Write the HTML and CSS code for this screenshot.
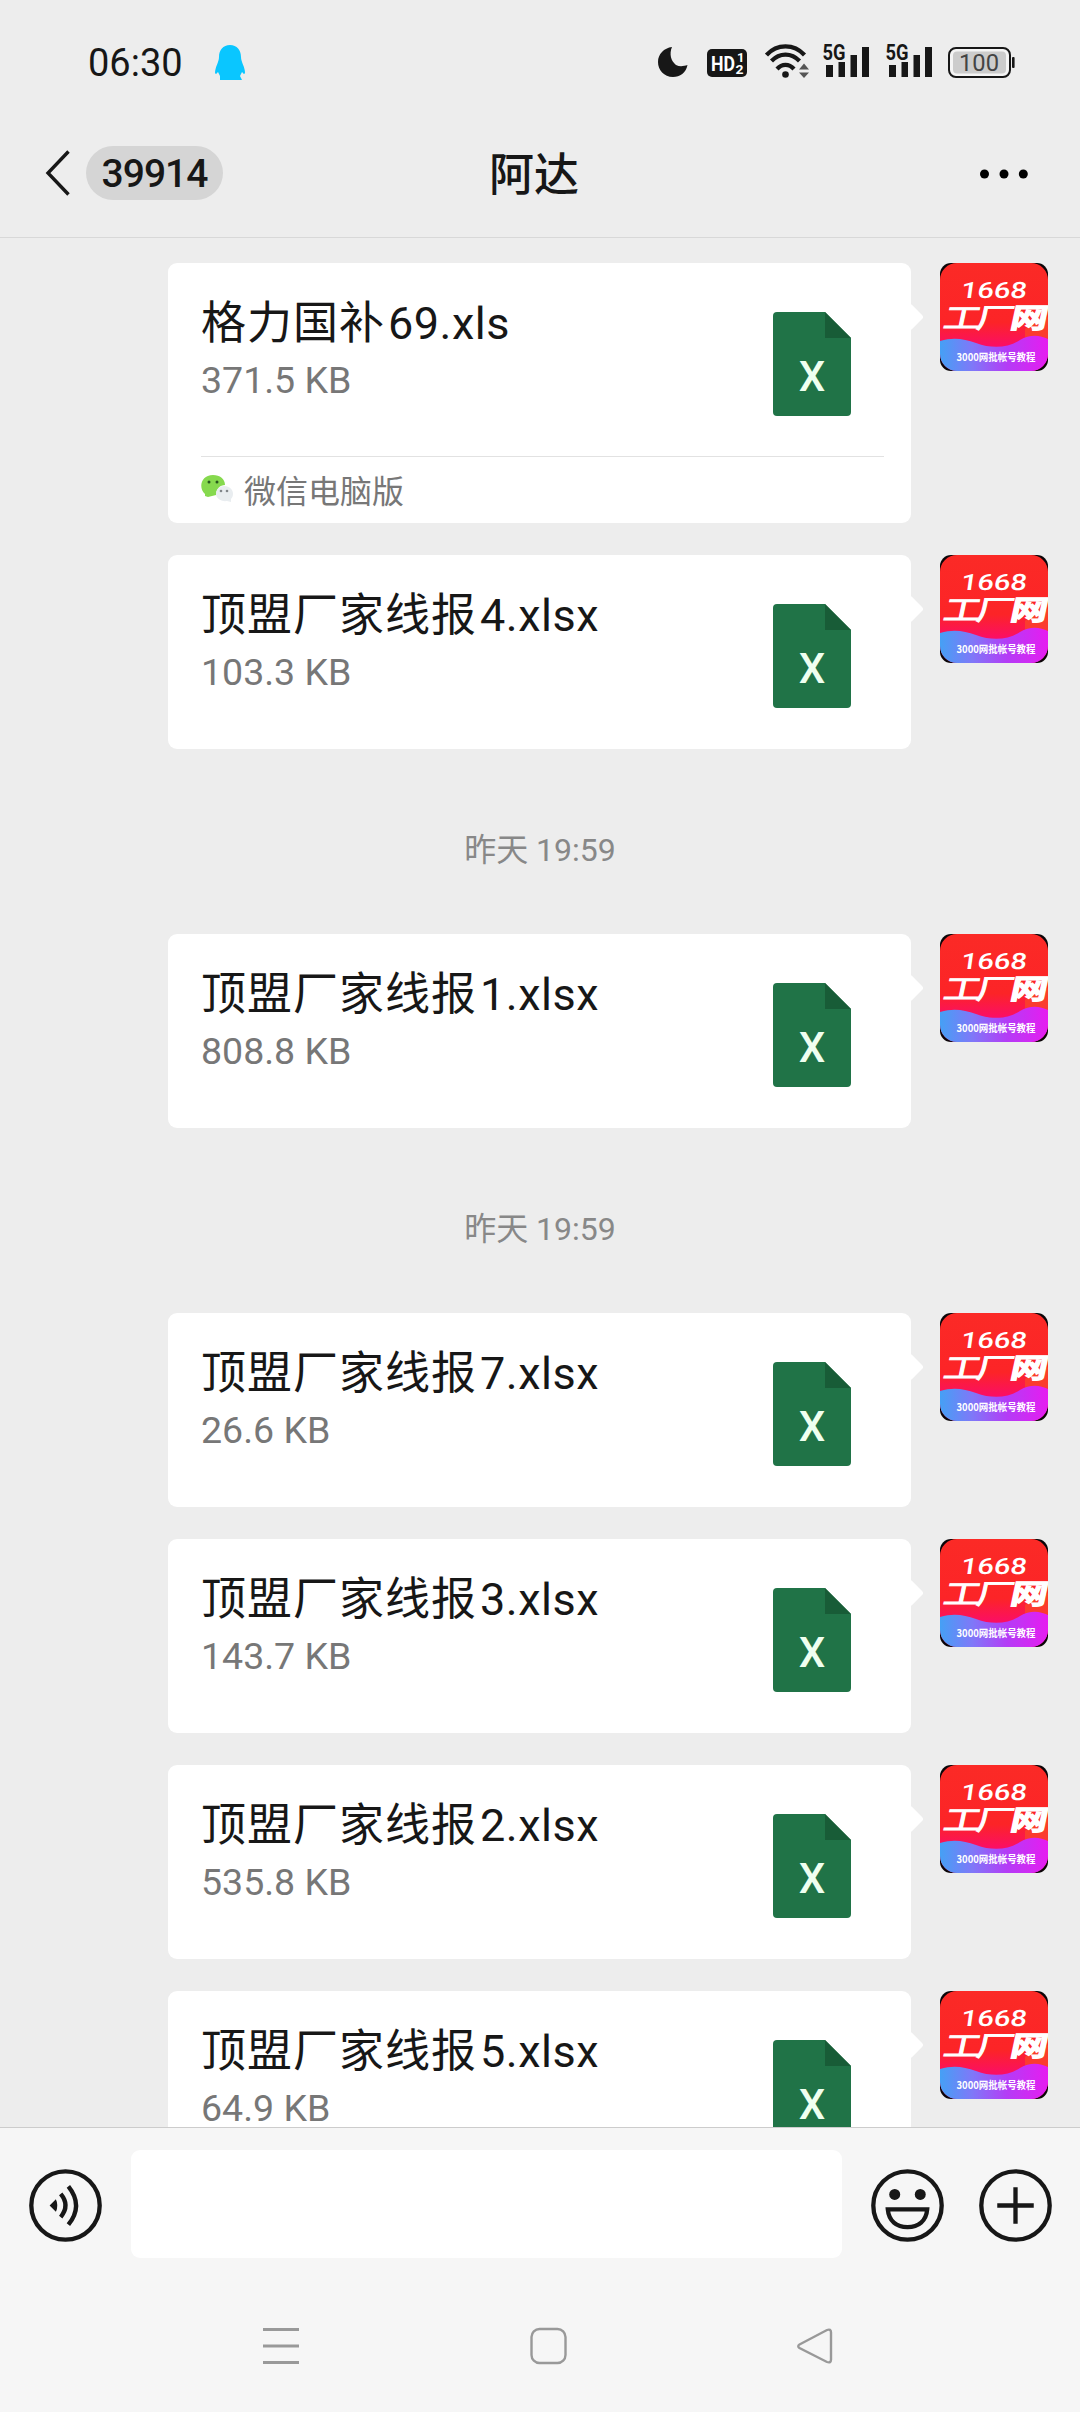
FILE: index.html
```html
<!DOCTYPE html>
<html lang="zh-CN">
<head>
<meta charset="utf-8">
<title>阿达</title>
<link rel="stylesheet" href="styles.css">
</head>
<body>
<svg class="defs" width="0" height="0" aria-hidden="true">
  <defs>
    <linearGradient id="wave" x1="0" y1="0" x2="1" y2="0">
      <stop offset="0" stop-color="#45a0f5"/><stop offset=".3" stop-color="#7f78f8"/>
      <stop offset=".62" stop-color="#b43cf6"/><stop offset="1" stop-color="#e61cf0"/>
    </linearGradient>
    <linearGradient id="red" x1="0" y1="0" x2="0" y2="1">
      <stop offset="0" stop-color="#fb2a26"/><stop offset=".55" stop-color="#fc2427"/><stop offset=".76" stop-color="#fb0f62"/>
    </linearGradient>
    <symbol id="avatar" viewBox="0 0 108 108">
      <rect width="108" height="108" fill="#0b0508"/>
      <rect width="108" height="108" rx="17" fill="url(#red)"/>
      <path d="M85 66C92 58 100 60 108 54V76H85Z" fill="#fb4a26" opacity=".7"/>
      <path d="M0 78C14 74 24 76 36 80C52 86 68 85 80 77C90 71 100 72 108 76V91A17 17 0 0 1 91 108H17A17 17 0 0 1 0 91Z" fill="url(#wave)"/>
      <g fill="#fff">
        <text class="av-num" transform="translate(20 34.5) skewX(-8)" textLength="66" lengthAdjust="spacingAndGlyphs">1668</text>
        <g class="av-name" transform="translate(0 65) skewX(-12)">
          <text x="2" textLength="37" lengthAdjust="spacingAndGlyphs">工</text>
          <text x="35" textLength="37" lengthAdjust="spacingAndGlyphs">厂</text>
          <text class="av-heavy" x="69" textLength="37" lengthAdjust="spacingAndGlyphs">网</text>
        </g>
        <text class="av-sub" x="16.5" y="98" textLength="79" lengthAdjust="spacingAndGlyphs">3000网批帐号教程</text>
      </g>
    </symbol>
    <symbol id="excel" viewBox="0 0 78 104">
      <path d="M4 0H52L78 26V100A4 4 0 0 1 74 104H4A4 4 0 0 1 0 100V4A4 4 0 0 1 4 0Z" fill="#207347"/>
      <path d="M52 0L78 26H52Z" fill="#185c37"/>
      <text class="xl-letter" x="39" y="79" text-anchor="middle" fill="#effff0">X</text>
    </symbol>
    <symbol id="signal" viewBox="0 0 46 34">
      <text class="sig-text" x="-.5" y="15.8" textLength="23" lengthAdjust="spacingAndGlyphs">5G</text>
      <path d="M3 21h7v12h-7zM15.500 18h6.500v15h-6.500zM27.500 11h6.500v22h-6.500zM39 3h7v30h-7z"/>
    </symbol>
  </defs>
</svg>

<div class="screen">
  <header class="top">
    <div class="status">
      <span class="clock">06:30</span>
      <svg class="qq" viewBox="0 0 30 36"><path fill="#0ac6ff" d="M15 0C22 0 26 5 26 12C26 17 30 22 30 28C29 30 28 28 27 27L25 31L27 35H5V31L3 27C2 28 1 30 0 28C0 22 4 17 4 12C4 5 8 0 15 0Z"/></svg>
      <div class="indicators">
        <svg class="moon" viewBox="0 0 30 30"><path d="M14 0C11 7 13 14 18 18C22 20 26 19 29.500 18C28 26 22 30 15 30C6 30 0 23 0 15C0 7 6 1 14 0Z"/></svg>
        <svg class="hd" viewBox="0 0 40 28"><rect width="40" height="28" rx="5"/><g fill="#fff"><text class="hd-main" x="4" y="22" textLength="24" lengthAdjust="spacingAndGlyphs">HD</text><text class="hd-sub" x="30" y="13">1</text><text class="hd-sub" x="28.500" y="25" textLength="8" lengthAdjust="spacingAndGlyphs">2</text></g></svg>
        <svg class="wifi" viewBox="0 0 45 34"><g fill="none" stroke="#171717" stroke-width="4.200"><path d="M1.500 11C12-.5 29-.5 39.500 11"/><path d="M6.500 17C14.500 8.500 26.500 8.500 34.500 17"/><path d="M12 25C17 19.500 24 19.500 29 25"/></g><circle cx="20.500" cy="30.500" r="3.300"/><path fill="#555" d="M34 25.500L39 19.500L44 25.500ZM34 28.500H44L39 34Z"/></svg>
        <svg class="signal"><use href="#signal"/></svg>
        <svg class="signal"><use href="#signal"/></svg>
        <svg class="battery" viewBox="0 0 67 31"><rect x="1" y="1" width="61" height="29" rx="7" fill="#f5f5f5" stroke="#171717" stroke-width="2"/><rect x="5" y="4.500" width="53" height="22" rx="4" fill="#ccc"/><rect x="64" y="10" width="2.600" height="11" rx="1"/><text class="bat-text" x="11" y="23.500" textLength="40" lengthAdjust="spacingAndGlyphs">100</text></svg>
      </div>
    </div>
    <div class="titlebar">
      <div class="back">
        <svg class="chevron" viewBox="0 0 26 46"><path d="M23.500 1.500L3 23L23.500 44.500" fill="none" stroke="#171717" stroke-width="3.400"/></svg>
        <span class="unread">39914</span>
      </div>
      <h1>阿达</h1>
      <svg class="more" viewBox="0 0 50 10"><circle cx="5.500" cy="5" r="4.500"/><circle cx="25" cy="5" r="4.500"/><circle cx="44.300" cy="5" r="4.500"/></svg>
    </div>
  </header>

  <main class="chat">
    <div class="message">
      <article class="card">
        <div class="file"><div class="info"><p class="name"><span class="han">格力国补</span>69.xls</p><p class="size">371.5 KB</p></div><svg class="excel"><use href="#excel"/></svg></div>
        <footer class="source">
          <svg class="wechat" viewBox="0 0 32 28"><path fill="#86d94e" d="M12 0C19 0 24 4 24 10C19 10 15 14 15 20L7 22L4 21V19C-3 13 0 0 12 0Z"/><path fill="#e9edf0" d="M23 11C29 11 32 15 32 19C32 21 31 23 30 24V27L26 26C20 27 15 23 15 19C15 14 19 11 23 11Z"/><g fill="#28571d"><circle cx="8" cy="7" r="1.500"/><circle cx="16" cy="7" r="1.500"/></g><g fill="#81868a"><circle cx="20" cy="16" r="1.300"/><circle cx="26" cy="16" r="1.300"/></g></svg>
          <span>微信电脑版</span>
        </footer>
      </article>
      <svg class="avatar"><use href="#avatar"/></svg>
    </div>
    <div class="message">
      <article class="card"><div class="file"><div class="info"><p class="name"><span class="han">顶盟厂家线报</span>4.xlsx</p><p class="size">103.3 KB</p></div><svg class="excel"><use href="#excel"/></svg></div></article>
      <svg class="avatar"><use href="#avatar"/></svg>
    </div>
    <time class="stamp">昨天 19:59</time>
    <div class="message">
      <article class="card"><div class="file"><div class="info"><p class="name"><span class="han">顶盟厂家线报</span>1.xlsx</p><p class="size">808.8 KB</p></div><svg class="excel"><use href="#excel"/></svg></div></article>
      <svg class="avatar"><use href="#avatar"/></svg>
    </div>
    <time class="stamp">昨天 19:59</time>
    <div class="message">
      <article class="card"><div class="file"><div class="info"><p class="name"><span class="han">顶盟厂家线报</span>7.xlsx</p><p class="size">26.6 KB</p></div><svg class="excel"><use href="#excel"/></svg></div></article>
      <svg class="avatar"><use href="#avatar"/></svg>
    </div>
    <div class="message">
      <article class="card"><div class="file"><div class="info"><p class="name"><span class="han">顶盟厂家线报</span>3.xlsx</p><p class="size">143.7 KB</p></div><svg class="excel"><use href="#excel"/></svg></div></article>
      <svg class="avatar"><use href="#avatar"/></svg>
    </div>
    <div class="message">
      <article class="card"><div class="file"><div class="info"><p class="name"><span class="han">顶盟厂家线报</span>2.xlsx</p><p class="size">535.8 KB</p></div><svg class="excel"><use href="#excel"/></svg></div></article>
      <svg class="avatar"><use href="#avatar"/></svg>
    </div>
    <div class="message">
      <article class="card"><div class="file"><div class="info"><p class="name"><span class="han">顶盟厂家线报</span>5.xlsx</p><p class="size">64.9 KB</p></div><svg class="excel"><use href="#excel"/></svg></div></article>
      <svg class="avatar"><use href="#avatar"/></svg>
    </div>
  </main>

  <footer class="bottom">
    <div class="composer">
      <svg class="tool" viewBox="0 0 76 76"><circle cx="38" cy="38" r="35.600"/><path class="solid" d="M21.500 38L28 31.500Q31 38 28 44.500Z"/><path d="M33 26Q43 38 33 50M41 18Q57 38 41 58"/></svg>
      <div class="input"></div>
      <svg class="tool" viewBox="0 0 76 76"><circle cx="38" cy="38" r="35.600"/><circle class="solid" cx="24.700" cy="26.500" r="5.700"/><circle class="solid" cx="51.300" cy="26.500" r="5.700"/><path d="M17.500 42H58.500C57.500 54 49.500 60.500 38 60.500S18.500 54 17.500 42Z"/></svg>
      <svg class="tool" viewBox="0 0 76 76"><circle cx="38" cy="38" r="35.600"/><path d="M38 19V57M19 38H57"/></svg>
    </div>
    <nav class="sysnav">
      <svg viewBox="0 0 38 38"><path d="M1 2.500H37M1 19H37M1 35.500H37" stroke-width="3"/></svg>
      <svg viewBox="0 0 38 38"><rect x="2.500" y="2" width="34" height="34" rx="8" stroke-width="2.400"/></svg>
      <svg viewBox="0 0 38 38"><path d="M3.500 17.500L31 3Q35 1.500 35 5.500V32.500Q35 36.500 31 35L3.500 21Q1 19 3.500 17.500Z" stroke-width="2.400"/></svg>
    </nav>
  </footer>
</div>
</body>
</html>
```
FILE: styles.css
```css
* { box-sizing: border-box; }
body, h1, p { margin: 0; }
body {
  background: #ededed;
  color: #171717;
  font-family: Roboto, "Noto Sans CJK SC", sans-serif;
}
svg { display: block; flex: none; }
.defs { position: absolute; }

.screen {
  display: flex;
  flex-direction: column;
  width: 1080px;
  height: 2412px;
  overflow: hidden;
}

/* Status bar and title */
.top {
  flex: none;
  height: 238px;
  border-bottom: 1px solid #d8d8d8;
}
.status {
  display: flex;
  align-items: center;
  height: 126px;
  padding: 0 65px 0 88px;
}
.clock { width: 127px; font-size: 38px; line-height: 44px; }
.qq { width: 30px; height: 36px; }
.indicators {
  display: flex;
  align-items: flex-end;
  height: 34px;
  margin-left: auto;
  margin-bottom: 4px;
  fill: #171717;
}
.moon { width: 30px; height: 30px; margin: 0 19px 1px 0; }
.hd { width: 40px; height: 28px; margin: 0 18px 1px 0; }
.hd-main { font: 700 21px Roboto, sans-serif; }
.hd-sub { font: 700 13px Roboto, sans-serif; }
.wifi { width: 45px; height: 34px; margin-right: 13px; }
.signal { width: 46px; height: 34px; margin-right: 17px; }
.signal + .battery { margin-left: -1px; }
.sig-text { font: 700 21.500px Roboto, sans-serif; }
.battery { width: 67px; height: 31px; }
.bat-text { font: 400 24px Roboto, sans-serif; fill: #444; }

.titlebar {
  display: grid;
  grid-template-columns: 1fr auto 1fr;
  align-items: center;
  height: 104px;
  padding: 0 45px 11px;
}
.back { display: flex; align-items: center; gap: 15px; }
.chevron { width: 26px; height: 46px; }
.unread {
  width: 137px;
  height: 54px;
  border-radius: 27px;
  background: #d5d5d5;
  font-size: 39px;
  font-weight: 500;
  line-height: 57px;
  letter-spacing: -1px;
  text-align: center;
}
h1 { font-size: 45px; font-weight: 500; line-height: 60px; margin: 6px 12px 0 0; }
.more { width: 50px; height: 10px; justify-self: end; margin: 3px 6px 0 0; }

/* Conversation */
.chat {
  display: flex;
  flex: 1;
  flex-direction: column;
  gap: 32px;
  min-height: 0;
  padding: 25px 32px 0 168px;
  overflow: hidden;
}
.message {
  display: flex;
  flex: none;
  align-items: flex-start;
  gap: 29px;
}
.card {
  position: relative;
  width: 743px;
  border-radius: 9px;
  background: #fff;
}
.card::after {
  content: "";
  position: absolute;
  top: 44px;
  right: -9px;
  width: 20px;
  height: 20px;
  border-radius: 3px;
  background: #fff;
  transform: rotate(45deg);
}
.file {
  display: flex;
  justify-content: space-between;
  height: 194px;
  padding: 33px 60px 0 33px;
}
.name { font-size: 45px; line-height: 56px; letter-spacing: .5px; }
.han { margin-right: 3px; letter-spacing: 1px; }
.size { margin-top: 6px; color: #777; font-size: 37.5px; line-height: 45px; }
.excel { width: 78px; height: 104px; margin-top: 16px; }
.xl-letter { font: 500 42px Roboto, sans-serif; }
.avatar { width: 108px; height: 108px; border-radius: 11px; }
.av-num { font: 500 22.500px Roboto, sans-serif; }
.av-name { font: 400 28px "Noto Sans CJK SC", sans-serif; stroke: #fff; stroke-width: .9px; }
.av-heavy { font-weight: 700; stroke-width: 1.200px; }
.av-sub { font: 700 10.500px "Noto Sans CJK SC", sans-serif; }
.source {
  display: flex;
  gap: 11px;
  height: 67px;
  margin: -1px 27px 0 33px;
  padding-top: 11px;
  border-top: 1px solid #e2e2e2;
  color: #777;
  font-size: 32px;
  line-height: 48px;
}
.wechat { width: 32px; height: 28px; margin-top: 7px; }
.stamp {
  flex: none;
  height: 121px;
  margin-left: -136px;
  padding-top: 49px;
  color: #888;
  font-size: 32px;
  line-height: 40px;
  text-align: center;
}

/* Input area and system navigation */
.bottom {
  flex: none;
  height: 285px;
  border-top: 1px solid #ccc;
  background: #f6f6f6;
}
.composer {
  display: flex;
  align-items: center;
  height: 152px;
  padding: 0 28px 0 29px;
}
.tool {
  width: 73px;
  height: 73px;
  margin-top: 3px;
  fill: none;
  stroke: #171717;
  stroke-width: 4.500;
}
.tool .solid { fill: #171717; stroke: none; }
.tool + .tool { margin-left: 35px; }
.input {
  flex: 1;
  height: 108px;
  margin: 0 29px;
  border-radius: 9px;
  background: #fff;
}
.sysnav {
  display: flex;
  justify-content: space-between;
  padding: 47px 246px 0 262px;
  fill: none;
  stroke: #999;
}
.sysnav svg { width: 38px; height: 38px; }
```
